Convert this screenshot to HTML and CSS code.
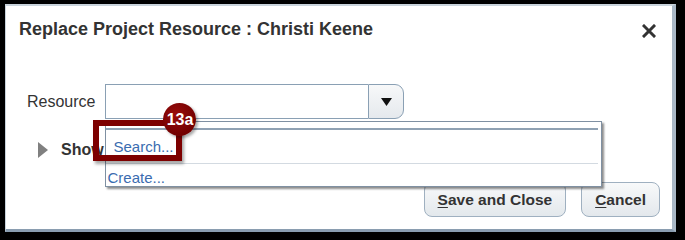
FILE: index.html
```html
<!DOCTYPE html>
<html>
<head>
<meta charset="utf-8">
<link rel="stylesheet" href="styles.css">
</head>
<body>
<div class="dialog">
  <div class="header">
    <div class="title">Replace Project Resource : Christi Keene</div>
    <svg class="close" width="14" height="14" viewBox="0 0 14 14"><path d="M2 2 L12 12 M12 2 L2 12" stroke="#333" stroke-width="3" stroke-linecap="square"/></svg>
  </div>
  <div class="form-row">
    <label class="label">Resource</label>
    <div class="combo">
      <div class="combo-input"></div>
      <div class="combo-btn"><svg width="11" height="8" viewBox="0 0 11 8"><path d="M0 0 H11 L5.5 8 Z" fill="#111"/></svg></div>
      <div class="popup">
        <div class="popup-line"></div>
        <div class="item item-search">Search...</div>
        <div class="sep"></div>
        <div class="item item-create">Create...</div>
      </div>
      <div class="callout"></div>
      <div class="badge">13a</div>
    </div>
  </div>
  <div class="show-row">
    <span class="tri"></span>
    <span class="show">Show</span>
  </div>
  <div class="actions">
    <button class="btn"><u>S</u>ave and Close</button>
    <button class="btn"><u>C</u>ancel</button>
  </div>
</div>
</body>
</html>
```
FILE: styles.css
```css
html, body {
  margin: 0;
  padding: 0;
}
body {
  width: 685px;
  height: 240px;
  background: #000;
  font-family: "Liberation Sans", Arial, sans-serif;
  color: #333;
  overflow: hidden;
}
.dialog {
  margin: 4px 9px 8px 5px;
  height: 228px;
  box-sizing: border-box;
  background: #fff;
  border-top: 2px solid #c9d3dc;
  border-left: 1px solid #c9d3dc;
  border-right: 4px solid #a9b8c6;
  border-bottom: 3px solid #8a9db0;
  display: flex;
  flex-direction: column;
  position: relative;
}
.header {
  display: flex;
  justify-content: space-between;
  align-items: center;
  padding: 13px 16px 0 13px;
}
.title {
  font-size: 18px;
  font-weight: bold;
  line-height: 21px;
  color: #333;
}
.close {
  display: block;
  margin-top: 2px;
}
.form-row {
  display: flex;
  align-items: center;
  gap: 10px;
  padding-left: 21px;
  margin-top: 44px;
}
.label {
  font-size: 16px;
  color: #333;
}
.combo {
  display: flex;
  position: relative;
  height: 35px;
}
.combo-input {
  width: 262px;
  height: 33px;
  border: 1px solid #8aa0b4;
  border-right: none;
  background: #fff;
}
.combo-btn {
  width: 34px;
  height: 33px;
  border: 1px solid #8aa0b4;
  border-radius: 0 9px 9px 0;
  background: linear-gradient(#f7f8f9, #e5e9ed);
  display: flex;
  align-items: center;
  justify-content: center;
}
.popup {
  position: absolute;
  left: 0;
  top: 37px;
  width: 497px;
  height: 66px;
  box-sizing: border-box;
  background: #fff;
  border: 1px solid #7f90a2;
  box-shadow: 2px 2px 2px rgba(0,0,0,0.45);
  padding: 6px 3px 0 0;
  z-index: 2;
}
.popup-line {
  height: 2px;
  background: #8fa1b3;
}
.item {
  font-size: 15px;
  color: #3a6cb0;
  line-height: 17px;
}
.item-search {
  padding: 8px 0 0 7px;
  height: 25px;
}
.sep {
  height: 1px;
  background: #d3dae1;
}
.item-create {
  padding: 5px 0 0 1px;
}
.callout {
  position: absolute;
  left: -12px;
  top: 36px;
  width: 89px;
  height: 41px;
  box-sizing: border-box;
  border: 6px solid #7d0000;
  box-shadow: 2px 3px 3px rgba(0,0,0,0.35);
  z-index: 3;
}
.badge {
  position: absolute;
  left: 58px;
  top: 19px;
  width: 33px;
  height: 33px;
  border-radius: 50%;
  background: radial-gradient(circle at 40% 35%, #9a0c0c, #720000 70%);
  color: #fff;
  font-weight: bold;
  font-size: 16px;
  display: flex;
  align-items: center;
  justify-content: center;
  box-shadow: 2px 2px 3px rgba(0,0,0,0.35);
  z-index: 4;
}
.show-row {
  display: flex;
  align-items: center;
  gap: 13px;
  padding-left: 32px;
  margin-top: 22px;
}
.tri {
  width: 0;
  height: 0;
  border-top: 8px solid transparent;
  border-bottom: 8px solid transparent;
  border-left: 10px solid #808080;
}
.show {
  font-size: 16px;
  font-weight: bold;
  color: #333;
}
.actions {
  margin-top: auto;
  display: flex;
  justify-content: flex-end;
  gap: 15px;
  padding: 0 12px 12px 0;
}
.btn {
  height: 35px;
  padding: 0 13px;
  font-family: "Liberation Sans", Arial, sans-serif;
  font-size: 15.5px;
  font-weight: bold;
  color: #333;
  background: linear-gradient(#f8f9fa, #e3e8ec);
  border: 1px solid #9fb0c0;
  border-radius: 8px;
}
.btn u {
  text-underline-offset: 2px;
}
```
